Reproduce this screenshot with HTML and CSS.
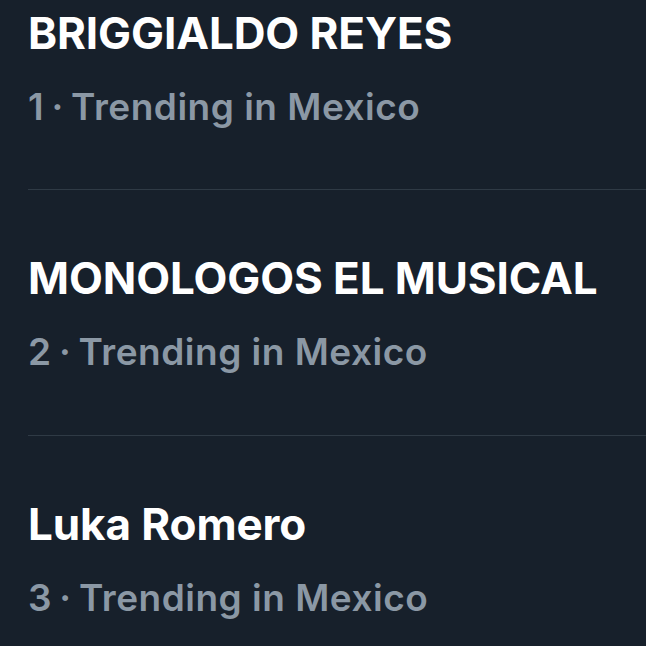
FILE: index.html
```html
<!DOCTYPE html>
<html lang="en">
<head>
<meta charset="utf-8">
<title>Trends</title>
<link rel="stylesheet" href="styles.css">
</head>
<body>
<ul class="trends">
  <li class="trend trend-first">
    <div class="trend-title">BRIGGIALDO REYES</div>
    <div class="trend-meta"><span class="trend-rank">1 · </span>Trending in Mexico</div>
  </li>
  <li class="trend">
    <div class="trend-title">MONOLOGOS EL MUSICAL</div>
    <div class="trend-meta"><span class="trend-rank">2 · </span>Trending in Mexico</div>
  </li>
  <li class="trend">
    <div class="trend-title">Luka Romero</div>
    <div class="trend-meta"><span class="trend-rank">3 · </span>Trending in Mexico</div>
  </li>
</ul>
</body>
</html>
```
FILE: styles.css
```css
html, body {
  margin: 0;
  padding: 0;
  background: #17202b;
  height: 100%;
  overflow: hidden;
}
body {
  font-family: Inter, "Liberation Sans", sans-serif;
}
.trends {
  list-style: none;
  margin: 0;
  padding: 0 0 0 28px;
}
.trend {
  padding: 60px 0 59px 0;
  border-bottom: 1px solid #2f3a45;
}
.trend-first {
  padding-top: 5px;
  padding-bottom: 58px;
}
.trend-title {
  color: #ffffff;
  font-size: 44px;
  font-weight: 700;
  line-height: 56px;
  letter-spacing: -0.1px;
}
.trend-meta {
  margin-top: 22px;
  color: #8b98a5;
  font-size: 37px;
  font-weight: 600;
  line-height: 48px;
  letter-spacing: 0.5px;
}
.trend-rank {
  word-spacing: -2.5px;
}
```
